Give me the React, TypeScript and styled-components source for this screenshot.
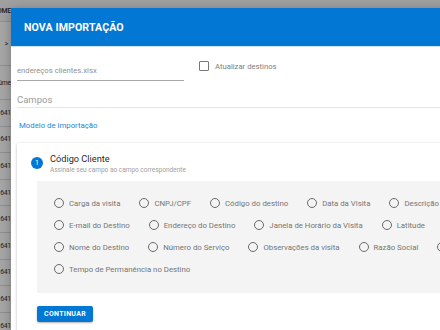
import styled, { createGlobalStyle } from 'styled-components'

const GlobalStyle = createGlobalStyle`
  html, body {
    margin: 0;
    padding: 0;
    width: 440px;
    height: 330px;
    overflow: hidden;
    font-family: Roboto, 'Noto Sans', sans-serif;
  }
`

const Screen = styled.div`
  position: relative;
  width: 440px;
  height: 330px;
  overflow: hidden;
  background: #fff;
`

const BackTable = styled.div`
  display: flex;
  flex-direction: column;
  width: 440px;
`

const BackRow = styled.div<{ $h: number; $head?: boolean }>`
  height: ${(p) => p.$h}px;
  display: flex;
  align-items: center;
  box-sizing: border-box;
  border-bottom: 1px solid #ddd;
  background: ${(p) => (p.$head ? '#f6f6f6' : '#fff')};
`

const BackCell = styled.div<{ $bold?: boolean }>`
  width: 11px;
  overflow: hidden;
  display: flex;
  justify-content: flex-end;
  white-space: nowrap;
  font-size: 6.8px;
  letter-spacing: -0.2px;
  font-weight: ${(p) => (p.$bold ? 500 : 400)};
  color: #333;
`

const Backdrop = styled.div`
  position: absolute;
  inset: 0;
  background: rgba(0, 0, 0, 0.35);
`

const Dialog = styled.div`
  position: absolute;
  left: 11px;
  top: 8px;
  width: 640px;
  height: 360px;
  background: #fff;
  box-shadow: 0 2px 10px rgba(0, 0, 0, 0.3);
`

const DialogHeader = styled.div`
  height: 38px;
  display: flex;
  align-items: center;
  padding-left: 13px;
  background: #0277d4;
  box-shadow: 0 1px 0 #cfe4f7;
`

const Title = styled.h1`
  margin: 0;
  font-size: 10.6px;
  font-weight: 700;
  color: #fff;
  letter-spacing: 0.1px;
`

const DialogBody = styled.div`
  padding: 14px 0 0 6px;
`

const FileRow = styled.div`
  display: flex;
  align-items: flex-start;
`

const FileField = styled.div`
  width: 167px;
  padding: 5px 0 3px;
  line-height: 12px;
  font-size: 7.7px;
  color: #8f8f8f;
  border-bottom: 1px solid #a8a8a8;
`

const CheckLabel = styled.label`
  display: flex;
  align-items: center;
  gap: 6px;
  margin: 1px 0 0 15px;
  font-size: 7.7px;
  color: #808080;
`

const CheckBox = styled.span`
  width: 8px;
  height: 8px;
  border: 1.5px solid #777;
  border-radius: 1px;
`

const CamposField = styled.div`
  margin-top: 12px;
  line-height: 14px;
  font-size: 9.5px;
  color: #9a9a9a;
  border-bottom: 1px solid #e6e6e6;
`

const TemplateLink = styled.a`
  display: block;
  margin: 12px 0 0 2px;
  line-height: 12px;
  font-size: 7.8px;
  color: #1a88de;
  text-decoration: none;
`

const StepCard = styled.div`
  margin-top: 11px;
  padding: 9px 0 20px 14px;
  background: #fff;
  box-shadow: 0 1px 3px rgba(0, 0, 0, 0.22), 0 0 1px rgba(0, 0, 0, 0.1);
`

const StepHead = styled.div`
  display: flex;
  align-items: flex-start;
  gap: 7px;
`

const StepBadge = styled.span`
  width: 12px;
  height: 12px;
  margin-top: 5px;
  border-radius: 50%;
  background: #0277d4;
  color: #fff;
  font-size: 7px;
  display: flex;
  align-items: center;
  justify-content: center;
`

const StepText = styled.div`
  display: flex;
  flex-direction: column;
`

const StepTitle = styled.span`
  font-size: 9.2px;
  line-height: 13px;
  color: #2a2a2a;
`

const StepHint = styled.span`
  font-size: 6.5px;
  line-height: 10px;
  color: #a0a0a0;
`

const OptionsPanel = styled.div`
  width: 500px;
  margin: 6px 0 0 6px;
  padding: 11px 17px 13px;
  box-sizing: border-box;
  background: #f4f4f4;
`

const OptionsList = styled.div`
  display: flex;
  flex-wrap: wrap;
`

const Option = styled.label`
  display: flex;
  align-items: center;
  gap: 5px;
  height: 22px;
  margin-right: 19px;
  font-size: 7.8px;
  color: #757575;
  white-space: nowrap;
`

const Radio = styled.span`
  width: 8px;
  height: 8px;
  border: 1.5px solid #6a6a6a;
  border-radius: 50%;
`

const ContinueButton = styled.button`
  margin: 13px 0 0 6px;
  width: 56px;
  height: 16px;
  padding: 0;
  border: none;
  border-radius: 2px;
  background: #0277d4;
  color: #fff;
  font-family: Roboto, sans-serif;
  font-size: 7px;
  font-weight: 700;
  letter-spacing: 0.3px;
  box-shadow: 0 1px 2px rgba(0, 0, 0, 0.3);
`

const fields = [
  'Carga da visita',
  'CNPJ/CPF',
  'Código do destino',
  'Data da Visita',
  'Descrição',
  'E-mail do Destino',
  'Endereço do Destino',
  'Janela de Horário da Visita',
  'Latitude',
  'Longitude',
  'Nome do Destino',
  'Número do Serviço',
  'Observações da visita',
  'Razão Social',
  'Telefone',
  'Tempo de Permanência no Destino',
]

const App = () => {
  const rows = Array.from({ length: 9 })

  return (
    <Screen>
      <GlobalStyle />
      <BackTable>
        <BackRow $h={22} $head>
          <BackCell $bold>NOME</BackCell>
        </BackRow>
        <BackRow $h={44}>
          <BackCell>&gt;&nbsp;&nbsp;</BackCell>
        </BackRow>
        <BackRow $h={34}>
          <BackCell>Núme</BackCell>
        </BackRow>
        {rows.map((_, i) => (
          <BackRow key={i} $h={26.6}>
            <BackCell>641</BackCell>
          </BackRow>
        ))}
      </BackTable>
      <Backdrop />
      <Dialog>
        <DialogHeader>
          <Title>NOVA IMPORTAÇÃO</Title>
        </DialogHeader>
        <DialogBody>
          <FileRow>
            <FileField>endereços clientes.xlsx</FileField>
            <CheckLabel>
              <CheckBox />
              Atualizar destinos
            </CheckLabel>
          </FileRow>
          <CamposField>Campos</CamposField>
          <TemplateLink href="#">Modelo de importação</TemplateLink>
          <StepCard>
            <StepHead>
              <StepBadge>1</StepBadge>
              <StepText>
                <StepTitle>Código Cliente</StepTitle>
                <StepHint>Assinale seu campo ao campo correspondente</StepHint>
              </StepText>
            </StepHead>
            <OptionsPanel>
              <OptionsList>
                {fields.map((f) => (
                  <Option key={f}>
                    <Radio />
                    {f}
                  </Option>
                ))}
              </OptionsList>
            </OptionsPanel>
            <ContinueButton>CONTINUAR</ContinueButton>
          </StepCard>
        </DialogBody>
      </Dialog>
    </Screen>
  )
}

export default App
